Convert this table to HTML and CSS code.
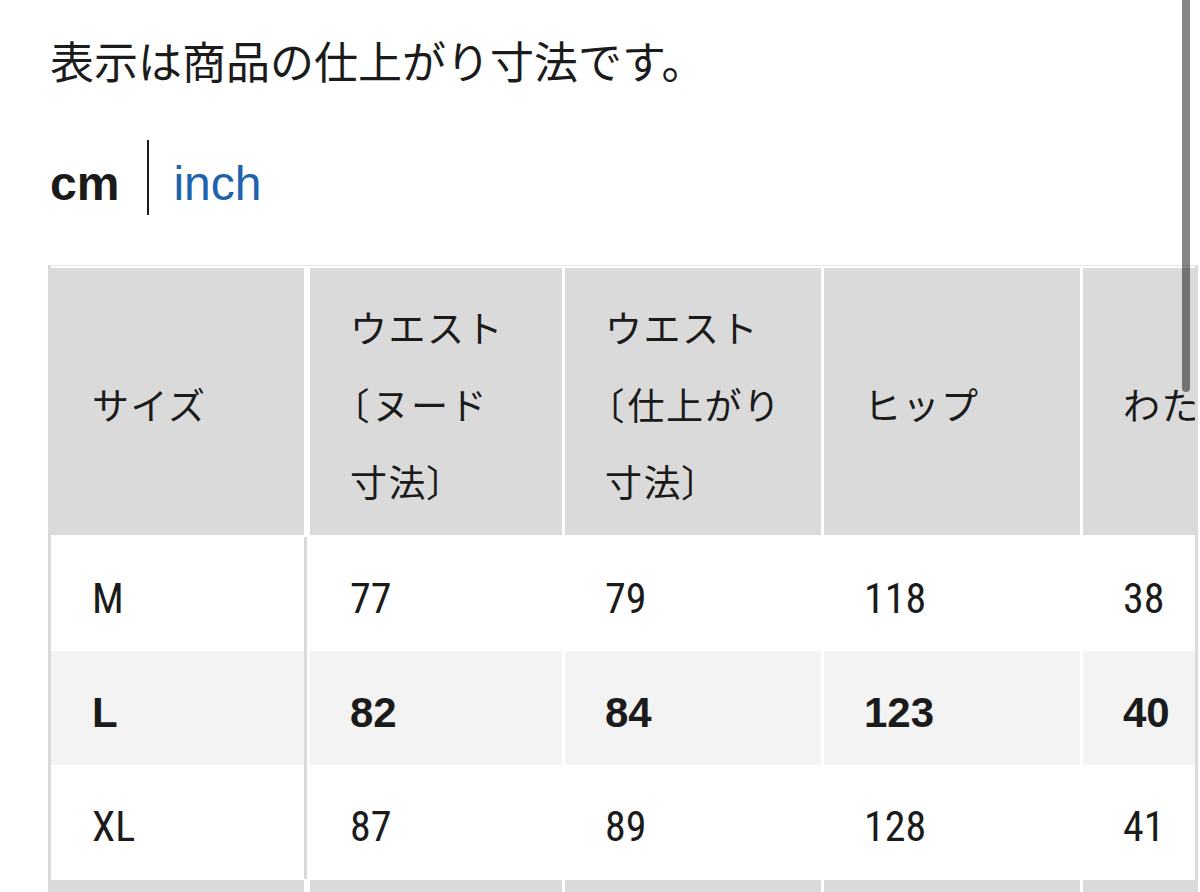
FILE: index.html
```html
<!DOCTYPE html>
<html lang="ja">
<head>
<meta charset="utf-8">
<title>サイズ表</title>
<link rel="stylesheet" href="styles.css">
</head>
<body>
<main class="page">
  <p class="note">表示は商品の仕上がり寸法です。</p>
  <div class="units">
    <span class="unit unit-active">cm</span>
    <span class="unit-sep"></span>
    <span class="unit unit-link">inch</span>
  </div>
  <div class="table-wrap">
    <table class="size-table">
      <thead>
        <tr>
          <th class="col-size">サイズ</th>
          <th class="col-val">ウエスト<br><span class="br">〔</span>ヌード<br>寸法<span class="br">〕</span></th>
          <th class="col-val">ウエスト<br><span class="br">〔</span>仕上がり<br>寸法<span class="br">〕</span></th>
          <th class="col-val">ヒップ</th>
          <th class="col-val">わたり</th>
        </tr>
      </thead>
      <tbody>
        <tr>
          <td>M</td><td>77</td><td>79</td><td>118</td><td>38</td>
        </tr>
        <tr class="row-current">
          <td>L</td><td>82</td><td>84</td><td>123</td><td>40</td>
        </tr>
        <tr>
          <td>XL</td><td>87</td><td>89</td><td>128</td><td>41</td>
        </tr>
        <tr class="row-next">
          <td></td><td></td><td></td><td></td><td></td>
        </tr>
      </tbody>
    </table>
  </div>
</main>
<div class="scrollbar"></div>
</body>
</html>
```
FILE: styles.css
```css
html, body {
  margin: 0;
  padding: 0;
  background: #ffffff;
}

body {
  width: 1200px;
  height: 892px;
  overflow: hidden;
  position: relative;
  color: #1b1b1b;
  font-family: "Liberation Sans", "Noto Sans CJK JP", sans-serif;
}

.page {
  padding-left: 48px;
}

.note {
  margin: 0;
  padding: 29px 0 0 2px;
  font-family: "Noto Sans CJK JP", sans-serif;
  font-size: 44px;
  line-height: 63px;
  font-weight: 400;
  color: #1b1b1b;
}

.units {
  display: flex;
  align-items: center;
  height: 75px;
  margin-top: 48px;
  padding-left: 2px;
}

.unit {
  font-family: "Liberation Sans", sans-serif;
  font-size: 48px;
  line-height: 48px;
  padding-top: 12px;
}

.unit-active {
  font-weight: 700;
  color: #1b1b1b;
}

.unit-sep {
  width: 2px;
  height: 75px;
  background: #1b1b1b;
  margin: 0 24px 0 28px;
}

.unit-link {
  color: #1d63ad;
}

.table-wrap {
  margin-top: 50px;
  width: 1150px;
  box-sizing: border-box;
  border-left: 3px solid #dadada;
  border-right: 3px solid #dadada;
  border-top: 1px solid #e4e4e4;
  overflow: hidden;
}

.size-table {
  border-collapse: separate;
  border-spacing: 0;
  table-layout: fixed;
  width: 1288px;
}

.size-table th,
.size-table td {
  box-sizing: border-box;
  text-align: left;
  vertical-align: middle;
  padding: 0 20px 0 40px;
  border-left: 3px solid #ffffff;
  white-space: nowrap;
}

.size-table th {
  background: #dadada;
  height: 271px;
  padding-top: 6px;
  border-top: 2px solid #ffffff;
  border-bottom: 2px solid #ffffff;
  font-family: "Noto Sans CJK JP", sans-serif;
  font-weight: 400;
  font-size: 37px;
  line-height: 77px;
  letter-spacing: 1.5px;
  color: #1b1b1b;
}

.size-table th .br {
  font-feature-settings: "palt";
  letter-spacing: 0;
  margin-right: 4px;
}

.size-table .col-size {
  width: 256px;
  border-left: 0;
  border-right: 3px solid #ffffff;
  padding-left: 41px;
}

.size-table th:nth-child(2) {
  width: 255px;
}

.size-table th:nth-child(3),
.size-table th:nth-child(4),
.size-table th:nth-child(5) {
  width: 259px;
}

.size-table td {
  height: 114px;
  padding-top: 10px;
  background: #ffffff;
  font-family: "Liberation Sans Narrow", "Roboto Condensed", "DejaVu Sans Condensed", "Liberation Sans", sans-serif;
  font-size: 42px;
  line-height: 42px;
  color: #1b1b1b;
}

.size-table td:first-child {
  border-left: 0;
  border-right: 3px solid #dadada;
  padding-left: 41px;
}

.size-table .row-current td {
  background: #f3f3f3;
  font-family: "Liberation Sans", sans-serif;
  font-weight: 700;
}

.size-table .row-next td {
  background: #dadada;
  border-top: 1px solid #ffffff;
  height: 40px;
}

.size-table .row-next td:first-child {
  border-right-color: #ffffff;
}

.scrollbar {
  position: absolute;
  left: 1182px;
  top: -6px;
  width: 8px;
  height: 398px;
  border-radius: 4px;
  background: rgba(0, 0, 0, 0.47);
}
```
